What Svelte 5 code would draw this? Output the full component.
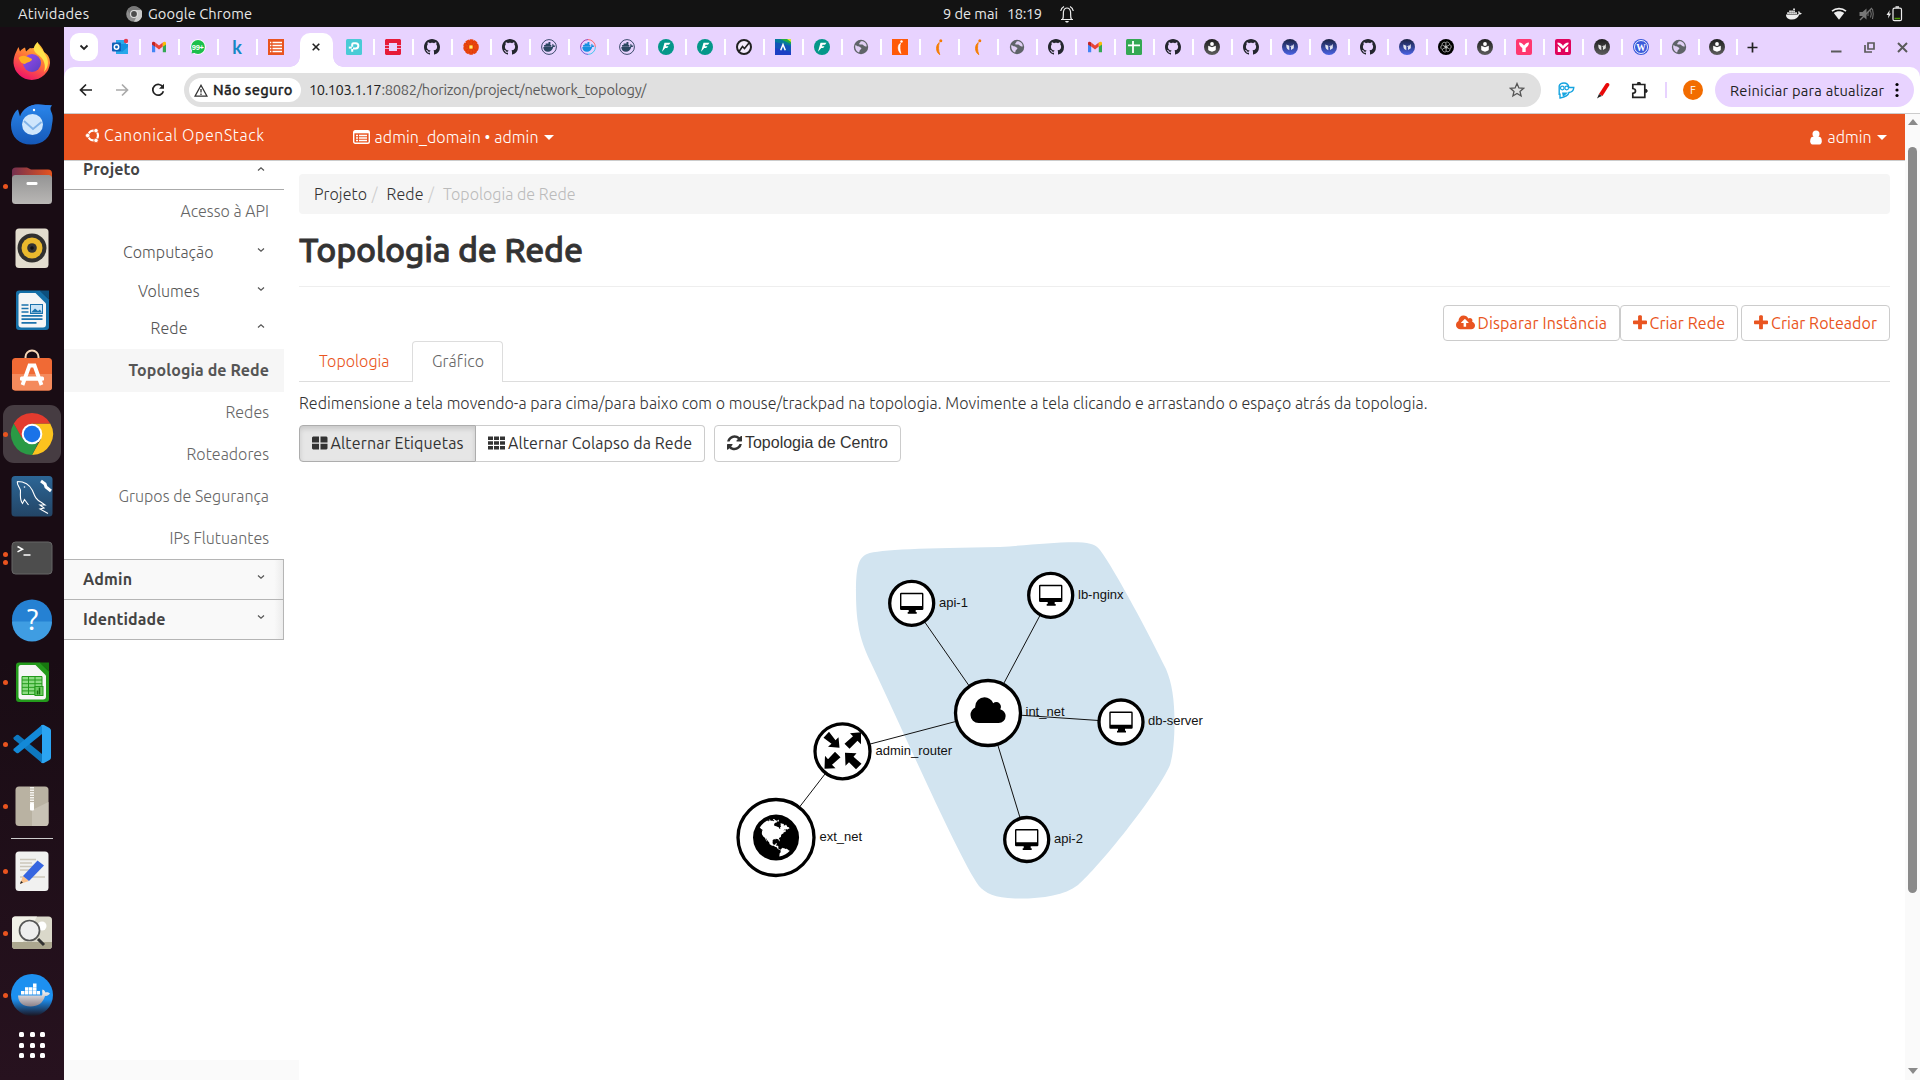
<script>
  // Spreads a label's letters so that it takes the given width in pixels.
  function fit(node, width) {
    const natural = node.getBoundingClientRect().width;
    const gap = (width - natural) / Math.max(1, node.textContent.length - 1);
    node.style.letterSpacing = gap + 'px';
    node.style.marginRight = -gap + 'px';
  }

  const tabsLeft = ['outlook', 'gmail', 'whats', 'k', 'list'];
  const tabsRight = [
    'tp', 'openstack', 'github', 'flower', 'github', 'docker', 'dockerc', 'docker', 'fi', 'fi', 'chart', 'caret',
    'fi', 'globe', 'orange', 'curl', 'curl', 'globe', 'github', 'gmail', 'sheets', 'github', 'reader', 'github',
    'blue', 'blue', 'github', 'blue', 'openai', 'reader', 'ypink', 'mpink', 'gray', 'wp', 'globe', 'reader'
  ];

  const dock = [
    { k: 'firefox', d: 0 }, { k: 'thunderbird', d: 0 }, { k: 'files', d: 1 }, { k: 'music', d: 0 },
    { k: 'writer', d: 0 }, { k: 'software', d: 0 }, { k: 'chrome', d: 1, active: true }, { k: 'mysql', d: 0 },
    { k: 'terminal', d: 2 }, { k: 'help', d: 0 }, { k: 'calc', d: 1 }, { k: 'code', d: 1 }, { k: 'archive', d: 1 },
    { k: 'sep' }, { k: 'editor', d: 1 }, { k: 'viewer', d: 1 }, { k: 'dockerapp', d: 1 }
  ];

  const subItems = [
    { s: 'Redes', w: 43.5 }, { s: 'Roteadores', w: 82.5 }, { s: 'Grupos de Segurança', w: 150.5 }, { s: 'IPs Flutuantes', w: 99.5 }
  ];

  const hub = { x: 988, y: 713 };
  const nodes = [
    { s: 'api-1', x: 911.7, y: 603.3, r: 22, lx: 939, ly: 607, k: 'pc' },
    { s: 'lb-nginx', x: 1050.7, y: 595.3, r: 22, lx: 1078, ly: 599, k: 'pc' },
    { s: 'db-server', x: 1121, y: 722, r: 22, lx: 1148, ly: 725, k: 'pc' },
    { s: 'api-2', x: 1026.7, y: 839.5, r: 22, lx: 1054, ly: 843, k: 'pc' },
    { s: 'int_net', x: 988, y: 713, r: 32.5, lx: 1025.5, ly: 716, k: 'cloud' },
    { s: 'admin_router', x: 842.5, y: 751.3, r: 27.5, lx: 875.5, ly: 755, k: 'router' },
    { s: 'ext_net', x: 776, y: 837.5, r: 38, lx: 819.5, ly: 841, k: 'world' }
  ];

  const CLOUD = 'M1920 1152q0 159-112.5 271.5t-271.5 112.5h-1088q-185 0-316.5-131.5t-131.5-316.5q0-132 71-241.5t187-163.5q-2-28-2-43 0-212 150-362t362-150q158 0 286.5 88t187.5 230q70-62 166-62 106 0 181 75t75 181q0 75-41 138 129 30 213 134.5t84 239.5z';
  const UPLOAD = 'M1280 864q0-14-9-23l-352-352q-9-9-23-9t-23 9l-351 351q-10 12-10 24 0 14 9 23t23 9h224v352q0 13 9.5 22.5t22.5 9.5h192q13 0 22.5-9.5t9.5-22.5v-352h224q13 0 22.5-9.5t9.5-22.5zm640 288q0 159-112.5 271.5t-271.5 112.5h-1088q-185 0-316.5-131.5t-131.5-316.5q0-130 70-240t188-165q-2-30-2-43 0-212 150-362t362-150q156 0 285.5 87t188.5 231q71-62 166-62 106 0 181 75t75 181q0 76-41 138 130 31 213.5 135.5t83.5 238.5z';
  const PLUS = 'M1408 736v192q0 40-28 68t-68 28h-416v416q0 40-28 68t-68 28h-192q-40 0-68-28t-28-68v-416h-416q-40 0-68-28t-28-68v-192q0-40 28-68t68-28h416v-416q0-40 28-68t68-28h192q40 0 68 28t28 68v416h416q40 0 68 28t28 68z';
  const REFRESH = 'M1511 1056q0 5-1 7-64 268-268 434.5t-478 166.5q-146 0-282.5-55t-243.5-157l-129 129q-19 19-45 19t-45-19-19-45v-448q0-26 19-45t45-19h448q26 0 45 19t19 45-19 45l-137 137q71 66 161 102t187 36q134 0 250-65t186-179q11-17 53-117 8-23 30-23h192q13 0 22.5 9.5t9.5 22.5zm25-800v448q0 26-19 45t-45 19h-448q-26 0-45-19t-19-45 19-45l138-138q-148-137-349-137-134 0-250 65t-186 179q-11 17-53 117-8 23-30 23h-199q-13 0-22.5-9.5t-9.5-22.5v-7q65-268 270-434.5t480-166.5q146 0 284 55.5t245 156.5l130-129q19-19 45-19t45 19 19 45z';
  const GLOBE = 'M768 128q209 0 385.5 103t279.5 279.5 103 385.5-103 385.5-279.5 279.5-385.5 103-385.5-103-279.5-279.5-103-385.5 103-385.5 279.5-279.5 385.5-103zm274 521q-2 1-9.5 9.5t-13.5 9.5q2 0 4.5-5t5-11 3.5-7q6-7 22-15 14-6 52-12 34-8 51 11-2-2 9.5-13t14.5-12q3-2 15-4.5t15-7.5l2-22q-12 1-17.5-7t-6.5-21q0 2-6 8 0-7-4.5-8t-11.5 1-9 1q-10-3-15-7.5t-8-16.5-4-15q-2-5-9.5-11t-9.5-10q-1-2-2.5-5.5t-3-6.5-4-5.5-5.5-2.5-7 5-7.5 10-4.5 5q-3-2-6-1.5t-4.5 1-4.5 3-5 3.5q-3 2-8.5 3t-8.5 2q15-5-1-11-10-4-16-3 9-4 7.5-12t-8.5-14h5q-1-4-8.5-8.5t-17.5-8.5-13-6q-8-5-34-9.5t-33-.5q-5 6-4.5 10.5t4 14 3.5 12.5q1 6-5.5 13t-6.5 12q0 7 14 15.5t10 21.5q-3 8-16 16t-16 12q-5 8-1.5 18.5t10.5 16.5q2 2 1.5 4t-3.5 4.5-5.5 4-6.5 3.5l-3 2q-11 5-20.5-6t-13.5-26q-7-25-16-30-23-8-29 1-5-13-41-26-25-9-58-4 6-1 0-15-7-15-19-12 3-6 4-17.5t1-13.5q3-13 12-23 1-1 7-8.5t9.5-13.5.5-6q35 4 50-11 5-5 11.5-17t10.5-17q9-6 14-5.5t14.5 5.5 14.5 5q14 1 15.5-11t-7.5-20q12 1 3-17-4-7-8-9-12-4-27 5-8 4 2 8-1-1-9.5 10.5t-16.5 17.5-16-5q-1-1-5.5-13.5t-9.5-13.5q-8 0-16 15 3-8-11-15t-24-8q19-12-8-27-7-4-20.5-5t-19.5 4q-5 7-5.5 11.5t5 8 10.5 5.5 11.5 4 8.5 3q14 10 8 14-2 1-8.5 3.5t-11.5 4.5-6 4q-3 4 0 14t-2 14q-5-5-9-17.5t-7-16.5q7 9-25 6l-10-1q-4 0-16 2t-20.5 1-13.5-8q-4-8 0-20 1-4 4-2-4-3-11-9.5t-10-8.5q-46 15-94 41 6 1 12-1 5-2 13-6.5t10-5.5q34-14 42-7l5-5q14 16 20 25-7-4-30-1-20 6-22 12 7 12 5 18-4-3-11.5-10t-14.5-11-15-5q-16 0-22 1-146 80-235 222 7 7 12 8 4 1 5 9t2.5 11 11.5-3q9 8 3 19 1-1 44 27 19 17 21 21 3 11-10 18-1-2-9-9t-9-4q-3 5 .5 18.5t10.5 12.5q-7 0-9.5 16t-2.5 35.5-1 23.5l2 1q-3 12 5.5 34.5t21.5 19.5q-13 3 20 43 6 8 8 9 3 2 12 7.5t15 10 10 10.5q4 5 10 22.5t14 23.5q-2 6 9.5 20t10.5 23q-1 0-2.5 1t-2.5 1q3 7 15.5 14t15.5 13q1 3 2 10t3 11 8 2q2-20-24-62-15-25-17-29-3-5-5.5-15.5t-4.5-14.5q2 0 6 1.5t8.5 3.5 7.5 4 2 3q-3 7 2 17.5t12 18.5 17 19 12 13q6 6 14 19.5t0 13.5q9 0 20 10.5t17 19.5q5 8 8 26t5 24q2 7 8.5 13.5t12.5 9.5l16 8 13 7q5 2 18.5 10.5t21.5 11.5q10 4 16 4t14.5-2.5 13.5-3.5q15-2 29 15t21 21q36 19 55 11-2 1 .5 7.5t8 15.5 9 14.5 5.5 8.5q5 6 18 15t18 15q6-4 7-9-3 8 7 20t18 10q14-3 14-32-31 15-49-18 0-1-2.5-5.5t-4-8.5-2.5-8.5 0-7.5 5-3q9 0 10-3.5t-2-12.5-4-13q-1-8-11-20t-12-15q-5 9-16 8t-16-9q0 1-1.5 5.5t-1.5 6.5q-13 0-15-1 1-3 2.5-17.5t3.5-22.5q1-4 5.5-12t7.5-14.5 4-12.5-4.5-9.5-17.5-2.5q-19 1-26 20-1 3-3 10.5t-5 11.5-9 7q-7 3-24 2t-24-5q-13-8-22.5-29t-9.5-37q0-10 2.5-26.5t3-25-5.5-24.5q3-2 9-9.5t10-10.5q2-1 4.5-1.5t4.5 0 4-1.5 3-6q-1-1-4-3-3-3-4-3 7 3 28.5-1.5t27.5 1.5q15 11 22-2 0-1-2.5-9.5t-.5-13.5q5 27 29 9 3 3 15.5 5t17.5 5q3 2 7 5.5t5.5 4.5 5-.5 8.5-6.5q10 14 12 24 11 40 19 44 7 3 11 2t4.5-9.5 0-14-1.5-12.5l-1-8v-18l-1-8q-15-3-18.5-12t1.5-18.5 15-18.5q1-1 8-3.5t15.5-6.5 12.5-8q21-19 15-35 7 0 11-9-1 0-5-3t-7.5-5-4.5-2q9-5 2-16 5-3 7.5-11t7.5-10q9 12 21 2 7-8 1-16 5-7 20.5-10.5t18.5-9.5q7 2 8-2t1-12 3-12q4-5 15-9t13-5l17-11q3-4 0-4 18 2 31-11 10-11-6-20 3-6-3-9.5t-15-5.5q3-1 11.5-.5t10.5-1.5q15-10-7-16-17-5-43 12zm-163 877q206-36 351-189-3-3-12.5-4.5t-12.5-3.5q-18-7-24-8 1-7-2.5-13t-8-9-12.5-8-11-7q-2-2-7-6t-7-5.5-7.5-4.5-8.5-2-10 1l-3 1q-3 1-5.5 2.5t-5.5 3-4 3 0 2.5q-21-17-36-22-5-1-11-5.5t-10.5-7-10-1.5-11.5 7q-5 5-6 15t-2 13q-7-5 0-17.5t2-18.5q-3-6-10.5-4.5t-12 4.5-11.5 8.5-9 6.5-8.5 5.5-8.5 7.5q-3 4-6 12t-5 11q-2-4-11.5-6.5t-9.5-5.5q2 10 4 35t5 38q7 31-12 48-27 25-29 40-4 22 12 26 0 7-8 20.5t-7 21.5q0 6 2 16z';
  const OCTOCAT = 'M8 0C3.58 0 0 3.58 0 8c0 3.54 2.29 6.53 5.47 7.59.4.07.55-.17.55-.38 0-.19-.01-.82-.01-1.49-2.01.37-2.53-.49-2.69-.94-.09-.23-.48-.94-.82-1.13-.28-.15-.68-.52-.01-.53.63-.01 1.08.58 1.23.82.72 1.21 1.87.87 2.33.66.07-.52.28-.87.51-1.07-1.78-.2-3.64-.89-3.64-3.95 0-.87.31-1.59.82-2.15-.08-.2-.36-1.02.08-2.12 0 0 .67-.21 2.2.82.64-.18 1.32-.27 2-.27.68 0 1.36.09 2 .27 1.53-1.04 2.2-.82 2.2-.82.44 1.1.16 1.92.08 2.12.51.56.82 1.27.82 2.15 0 3.07-1.87 3.75-3.65 3.95.29.25.54.73.54 1.48 0 1.07-.01 1.93-.01 2.2 0 .21.15.46.55.38A8.012 8.012 0 0 0 16 8c0-4.42-3.58-8-8-8z';
  const WHALE = 'M1 8.5h11.2c.8 0 1.300-.4 1.400-1.200-.5-.7-.4-1.700.2-2.300.8.500 1 1.100 1 1.800.8-.1 1.500.1 2 .5-.5 1-1.400 1.300-2.500 1.200-1.300 3.300-3.800 5-7.300 5-4 0-6-1.600-6-5zM2.200 6.300h1.700v1.600h-1.700zM4.200 6.300h1.700v1.600h-1.700zM6.200 6.300h1.700v1.600h-1.700zM8.200 6.300h1.700v1.600h-1.700zM10.200 6.300h1.700v1.600h-1.700zM4.200 4.400h1.700v1.600h-1.700zM6.200 4.400h1.700v1.600h-1.700zM8.200 4.400h1.700v1.600h-1.700zM8.200 2.500h1.700v1.600h-1.700z';
  const MINIWHALE = 'M2.300 8h8.200c.7 0 1-.5.8-1.200-.2-.9 0-1.600.5-2 .6.500.9 1.100.9 1.700.7-.1 1.100 0 1.600.4-.4.800-1.100 1.200-2 1.200C11.500 11.300 9.500 12.800 7 12.800c-3 0-4.700-1.700-4.700-4.800zM3.100 6h7.200v1.700H3.100zM4.600 4.400h4.800v1.500H4.600zM7.500 2.900h1.900v1.500H7.500z';
</script>

{#snippet label(s, w)}<span class="fit" use:fit={w}>{s}</span>{/snippet}

{#snippet favicon(k)}
  <svg class="fav" viewBox="0 0 16 16">
    {#if k === 'outlook'}
      <rect x="4" y="1" width="10" height="8" fill="#28a8ea" /><path d="M9 5h7v10H4V9z" fill="#1490df" /><path d="M4 9l6 4 6-5v7H4z" fill="#28a8ea" />
      <rect y="3.500" width="9" height="9" rx="1" fill="#0f62b8" /><circle cx="4.500" cy="8" r="2.200" fill="none" stroke="#fff" stroke-width="1.500" />
      <circle cx="14" cy="2" r="2.200" fill="#e23b4b" />
    {:else if k === 'gmail'}
      <path d="M1 4v9.300h3.200V7z" fill="#4285f4" /><path d="M11.800 7v6.300H15V4z" fill="#34a853" />
      <path d="M4.200 3.400L8 6.400l3.800-3v4.200L8 10.500 4.200 7.600z" fill="#ea4335" /><path d="M1 4.200v1.300L4.200 7.800V3.400C3 2.400 1 2.700 1 4.200z" fill="#c5221f" /><path d="M15 4.200v1.300l-3.200 2.300V3.400C13 2.400 15 2.700 15 4.200z" fill="#fbbc04" />
    {:else if k === 'whats'}
      <circle cx="8" cy="8" r="7.800" fill="#fff" /><circle cx="8" cy="8" r="6.900" fill="#1bbf4b" /><path d="M1.500 14.500l1-4 3 3z" fill="#1bbf4b" />
      <text x="7.700" y="10.800" class="badge">99+</text>
    {:else if k === 'k'}
      <text x="8" y="15" class="kmark">k</text>
    {:else if k === 'list'}
      <rect width="16" height="16" fill="#e9541f" /><path d="M4.500 3.500H14M4.500 6.500H14M4.500 9.500H14M4.500 12.500H14M2 3.500h1.300M2 6.500h1.300M2 9.500h1.300M2 12.500h1.300" stroke="#fff" stroke-width="1.300" />
    {:else if k === 'tp'}
      <rect width="16" height="16" rx="1.500" fill="#4acbd6" /><path d="M6.200 12.800V10M6.200 7.800V5.500q0-1.300 1.300-1.300h2.200a2.600 2.600 0 0 1 0 5.300H7" fill="none" stroke="#fff" stroke-width="2" /><path d="M2.800 8.600h3" stroke="#fff" stroke-width="2" />
    {:else if k === 'openstack'}
      <path d="M1 0h14l1 1v5h-4V4H4v2H0V1zM0 10h4v2h8v-2h4v5l-1 1H1l-1-1z" fill="#e61b38" /><path d="M0 6.800h4v2.400H0zM12 6.800h4v2.400h-4z" fill="#e61b38" />
    {:else if k === 'github'}
      <path d={OCTOCAT} fill="#24262e" />
    {:else if k === 'flower'}
      <circle cx="8" cy="8" r="7" fill="#d93608" /><circle cx="8" cy="8" r="6.300" fill="none" stroke="#e8430c" stroke-width="3" stroke-dasharray="3.300 .66" /><circle cx="8" cy="8" r="4" fill="none" stroke="#e8480f" stroke-width="2.500" stroke-dasharray="2 .5" /><circle cx="8" cy="8" r="2.200" fill="#ffb52a" /><circle cx="8" cy="8" r="1.100" fill="#fff0a0" />
    {:else if k === 'docker'}
      <circle cx="8" cy="8" r="7.400" fill="none" stroke="#3b4b6b" stroke-width="1" /><path d={MINIWHALE} fill="#2b4760" />
    {:else if k === 'dockerc'}
      <path d="M8 .6A7.400 7.400 0 0 0 .6 8" class="ring" stroke="#a33ea5" /><path d="M8 .6A7.400 7.400 0 0 1 15.400 8" class="ring" stroke="#ff6b6b" /><path d="M15.400 8A7.400 7.400 0 0 1 8 15.400" class="ring" stroke="#45c8f0" /><path d="M8 15.400A7.400 7.400 0 0 1 .6 8" class="ring" stroke="#6a62d8" />
      <path d={MINIWHALE} fill="#1690e0" />
    {:else if k === 'fi'}
      <circle cx="8" cy="8" r="8" fill="#049789" /><path d="M6.500 3.800h6L11 5.800H8.500L8 7.200h2.500L9.200 9H7.300L4 12.800z" fill="#fff" />
    {:else if k === 'chart'}
      <circle cx="8" cy="8" r="7" fill="#f4ecfc" stroke="#202020" stroke-width="2" /><path d="M3 12.500L6.500 7.500 8.500 9.500 13 4" fill="none" stroke="#202020" stroke-width="1.600" />
    {:else if k === 'caret'}
      <rect width="16" height="16" fill="#1254b8" /><path d="M0 0h16v7L0 3z" fill="#057a9c" /><path d="M5 0h11v5z" fill="#22ad43" /><path d="M12 0h4v3z" fill="#d6e835" /><path d="M0 9l16 4v3H0z" fill="#1c3fc4" /><path d="M5.700 11.200L8 5.500l2.300 5.700" fill="none" stroke="#fff" stroke-width="1.500" />
    {:else if k === 'globe'}
      <circle cx="8" cy="8" r="7.200" fill="#5f6368" /><path d="M2.300 6.200c1.300-.4 1.500 1 2.900 1s1.400 1 2.500 1.300c1.300.3.400 2-.4 2.200-1 .2-.5 2-1.300 2.800C3.500 12.600 1.700 9.500 2.300 6.200zM7.500 2.500c.3 1.300-1.700 1.300-1.200 2.700.4 1 2.600-.2 3.500.6.900.8 2 2.200 3.900 1.600.2-3-3-6-6.200-4.900z" fill="#e0cff4" />
    {:else if k === 'orange'}
      <rect width="16" height="16" fill="#ff5a08" /><circle cx="9.500" cy="2.500" r="1.200" fill="#fff" /><path d="M8.500 4.200C5.500 6 5.500 11.500 8.800 14.500 7.800 11 7.500 7 8.500 4.200z" fill="#fff" stroke="#fff" stroke-width=".8" />
    {:else if k === 'curl'}
      <circle cx="9.800" cy="1.800" r="1.500" fill="#f57c00" /><path d="M8.300 3.500C4.500 6 4.500 13 8.800 15.700 7.200 11.500 7.200 7 8.300 3.500z" fill="#f57c00" stroke="#f57c00" stroke-width=".8" />
    {:else if k === 'sheets'}
      <rect width="16" height="16" rx="1.500" fill="#34a853" /><path d="M7 2v12M2 6.300h12" stroke="#fff" stroke-width="1.800" />
    {:else if k === 'reader' || k === 'blue' || k === 'gray'}
      <circle cx="8" cy="8" r="8" class={'disc-' + k} />
      {#if k === 'reader'}
        <circle cx="8" cy="5" r="1.900" fill="#fff" /><path d="M4.200 6.800L8 8.300l3.800-1.500v3.700c0 .8-1 1.300-1.800 1.600L8 12.700l-2-.6c-.8-.3-1.800-.8-1.800-1.600z" fill="#fff" />
      {:else}
        <path d="M4.300 5.500l3 1.300v4.400L5.300 10C4.300 9 4.300 7 4.300 5.500zM11.800 5v4.300L9 11V8z" fill="#fff" opacity=".85" /><path d="M8.200 8l1.300-2v2z" fill="#fff" />
      {/if}
    {:else if k === 'openai'}
      <circle cx="8" cy="8" r="8" fill="#000" />
      {#each [0, 60, 120, 180, 240, 300] as a}<path d="M8 3.200c2-.8 3.800.8 3.600 2.600L8.200 7.800v2" fill="none" stroke="#ccc" stroke-width=".7" transform={`rotate(${a} 8 8)`} />{/each}
    {:else if k === 'ypink'}
      <rect width="16" height="16" rx="2" fill="#ff3870" /><path d="M3 3.500c2.500 0 4 1.500 5 3 1-1.500 2.500-3 5-3 0 2.500-1.500 4.500-3.300 5.500v4H6.300V9C4.500 8 3 6 3 3.500z" fill="#fff" />
    {:else if k === 'mpink'}
      <rect width="16" height="16" rx="2" fill="#e0045c" /><path d="M2.500 3.500c2.500 0 4.500 1.500 5.500 3.500 1-2 3-3.500 5.500-3.500V5L9.800 8.500 8 10 6.200 8.500 2.500 5zM2.800 7l3 3v3h-3zM13.200 7l-3 3v3h3z" fill="#fff" />
    {:else if k === 'wp'}
      <circle cx="8" cy="8" r="8" fill="#3b5bdb" /><circle cx="8" cy="8" r="6.500" fill="none" stroke="#fff" stroke-width=".9" /><text x="8" y="11.500" class="wmark">W</text>
    {/if}
  </svg>
{/snippet}

{#snippet app(k)}
  <svg class="app" viewBox="0 0 48 48">
    {#if k === 'firefox'}
      <path d="M22 10c5 1 8-2 7-6 3 3 6 6 7 10 5 3 6 7 6 11a18.300 18.300 0 0 1-36.500 0C5.500 18 8 14 10.500 9l1.500 4.500c1-2 3-3 5-4l1 4z" fill="url(#ff)" />
      <path d="M29.500 4c-4 4-5.500 8-.5 12 8 5 9 12 7 18 5-5 5-12 1.500-17-2-5-7-8-8-13z" fill="#ffe14a" /><circle cx="24" cy="25" r="9" fill="url(#fp)" />
      <path d="M10.500 20c4-4 8-2 13.500 1 0 3-5 3-7 5-4 0-5.500-4-6.500-6z" fill="#ffae22" />
    {:else if k === 'thunderbird'}
      <path d="M3 25C3 18 7 11 10 9.500l2 7c2-7 9-12 18-12 5 0 10 1 14 1-2 2-2 4 0 8 1 3 1 6 0 11C43 38 35 44.500 23 44.500S3 37 3 25z" fill="url(#tb)" /><path d="M14 14C17 7 23 4.500 30 4.500c5 0 10 1 14 1-4 2-5 3-8 5.500-8-4-15-2.500-22 3z" fill="#2b7fe8" /><circle cx="24.500" cy="24.500" r="10.500" fill="#cfe6fc" /><path d="M16 21l9 8 8.500-7" fill="none" stroke="#7fb2e8" stroke-width="1.800" /><circle cx="26" cy="10" r="1.200" fill="#fff" />
    {:else if k === 'files'}
      <path d="M4 9q0-3.500 4-3.500h11l4 2h17q4 0 4 4v16H4z" fill="url(#fo)" /><rect x="4" y="13" width="40" height="29" rx="3.500" fill="url(#gr)" /><rect x="18.500" y="20" width="11" height="3" rx="1.300" fill="#fff" />
    {:else if k === 'music'}
      <rect x="7.500" y="4.500" width="33" height="39.500" rx="3.500" fill="#e3ddcf" /><circle cx="24" cy="24" r="14.500" fill="#31302f" /><circle cx="24" cy="24" r="10.500" fill="#eab92d" /><circle cx="24" cy="24" r="4.800" fill="#333" /><circle cx="24" cy="24" r="1.800" fill="#111" />
    {:else if k === 'writer' || k === 'calc'}
      <path d="M11 4.500h21l9 9v27.500q0 3-3 3H11q-3 0-3-3V7.500q0-3 3-3z" fill={k === 'writer' ? '#1670a8' : '#239a1b'} /><path d="M12.500 7h15L38 17.500v21q0 3-3 3H13.500q-3 0-3-3V9.500q0-2.500 2-2.500z" fill="#f6f6f6" /><path d="M31.500 4.500H41v9z" fill={k === 'writer' ? '#0d4f7d' : '#17770f'} />
      {#if k === 'writer'}
        <path d="M13.500 19h7M13.500 22.500h7M13.500 26h7M13.500 29.800h21M13.500 33.200h21M13.500 36.800h15" stroke="#1d73ad" stroke-width="1.700" /><rect x="22.500" y="18.500" width="12" height="9" fill="#cbe4f6" stroke="#1d73ad" /><path d="M23 26.500l4-4 3 2.500 2-1.500 2 3z" fill="#1d73ad" />
      {:else}
        <rect x="14" y="18.500" width="20" height="18" fill="#8cdc82" /><path d="M14 18.500h20v18H14zM14 22h20M14 25.700h20M14 29.300h20M14 32.900h20M20.500 18.500v18M27 18.500v18" fill="none" stroke="#239a1b" stroke-width="1" /><rect x="27" y="28.500" width="8" height="9" fill="#6fcc62" stroke="#239a1b" /><path d="M29.500 36.500v-4M31.500 36.500v-7" stroke="#17770f" stroke-width="1.500" />
      {/if}
    {:else if k === 'software'}
      <path d="M17.500 12V9a6.500 6.500 0 0 1 13 0v3" fill="none" stroke="#f7d7b6" stroke-width="2" /><rect x="4" y="10" width="40" height="32.500" rx="3.500" fill="#f06a35" /><path d="M4 26h40v13q0 3.500-3.500 3.500h-33Q4 42.500 4 39z" fill="#f48a5c" /><path d="M14.500 37L21.500 17.500h5L33.500 37" fill="none" stroke="#fff" stroke-width="3.800" /><rect x="12" y="28.500" width="24" height="4.200" rx="1.500" fill="#fff" />
    {:else if k === 'chrome'}
      <path d="M24 13.500h18.200A21 21 0 0 1 24 45l9-16z" fill="#fcc31e" /><path d="M5.800 13.500L15 29.300 30 33l-6 12A21 21 0 0 1 5.800 13.500z" fill="#2a9a45" /><path d="M5.800 13.500A21 21 0 0 1 42.200 13.500H24L14 28z" fill="#e33b2e" /><circle cx="24" cy="24" r="10.300" fill="#fff" /><circle cx="24" cy="24" r="8.300" fill="#1a73e8" />
    {:else if k === 'mysql'}
      <rect x="3.500" y="4" width="41" height="40.500" rx="3.500" fill="url(#my)" /><path d="M9.500 9.500c7 0 12 3 15 9 2 5 3 9 9 12l3.500 2.500-5 0 4 3-4 1 8 4.500M9.500 9.500c-1 3 2 5 3 9 0 5-1 9 2 13l2-4 4 5.500" fill="none" stroke="#fff" stroke-width="1.100" /><circle cx="16.500" cy="15" r=".8" fill="#fff" /><path d="M33 9l4 3 1 3 5 4" fill="none" stroke="#fff" stroke-width="3" />
    {:else if k === 'terminal'}
      <rect x="4" y="8" width="40" height="32" rx="3.500" fill="#4d4d4d" stroke="#676767" /><path d="M9.500 12.500l5 2.700-5 2.700" fill="none" stroke="#fff" stroke-width="1.500" /><path d="M15.500 21h7" stroke="#fff" stroke-width="1.500" />
    {:else if k === 'help'}
      <circle cx="24" cy="23.500" r="20" fill="#2581d3" /><path d="M4 25.500a20 20 0 0 0 40 0z" fill="#3f9de2" /><text x="24.500" y="34" class="qmark">?</text>
    {:else if k === 'code'}
      <path d="M5.500 17.500l3-2.500q1-.5 2 0L34 34v9L6 19.500q-1-1-.5-2z" fill="#0e78c0" /><path d="M5.500 30.500l3 2.500q1 .5 2 0L34 14V5L6 28.500q-1 1-.5 2z" fill="#1389d8" /><path d="M33 5.500q1.500-1 3-.5l5.500 3q1.500 1 1.500 2.500v27q0 1.500-1.500 2.500L36 43q-1.500.5-3-.5 1 0 1-2v-33q0-1-1-2z" fill="#2ba4f2" />
    {:else if k === 'archive'}
      <rect x="7.500" y="4.500" width="33" height="39.500" rx="3.500" fill="#b9b2a2" /><path d="M24 28l16.500-8v20.500q0 3.500-3.500 3.500H24z" fill="#c8c2b5" /><path d="M24 5v17" stroke="#f4f2ee" stroke-width="4" stroke-dasharray="1.500 1" /><rect x="22" y="21" width="4" height="7.500" rx="1" fill="#fff" />
    {:else if k === 'editor'}
      <rect x="7.500" y="4.500" width="33" height="39.500" rx="3.500" fill="#f1f1f0" /><path d="M12 12.500h16M12 16h12M12 19.500h14M12 23h11M12 30h25" stroke="#cbc6b9" stroke-width="1.500" /><path d="M12 37l3-8 6 5z" fill="#fac08a" /><path d="M15 29l14.500-15.500 6.500 5L21 34z" fill="#3665e0" /><path d="M12 37l1-3 2 1.500z" fill="#222" />
    {:else if k === 'viewer'}
      <rect x="4" y="7.500" width="40" height="32.500" rx="3.500" fill="#dad8ca" /><path d="M7 7.500h22L15 33H4V11q0-3.500 3-3.500z" fill="#f1f0e7" /><path d="M4 33h40v3.500q0 3.500-3.500 3.500h-33Q4 40 4 36.500z" fill="#aca78f" /><circle cx="34" cy="17" r="4.500" fill="#fff" /><circle cx="21.500" cy="21.500" r="10" fill="#eee" stroke="#555" stroke-width="1.700" /><path d="M30 30l6 6" stroke="#333" stroke-width="3" />
    {:else if k === 'dockerapp'}
      <circle cx="24" cy="24" r="21" fill="url(#dk)" /><path d="M10 24.500h24c1-2-.5-4 .5-6 2 .5 2.500 2 3 3 2-.5 3 0 4.500 1-1.500 2-3 2.500-5 2.500-2 7-7 10.500-14.500 10.500S10.500 32 10 24.500z" fill="url(#wh)" /><path d="M13 20h3.500v3.500H13zM17 20h3.500v3.500H17zM21 20h3.500v3.500H21zM25 20h3.500v3.500H25zM29 20h3v3.500H29zM17 16.200h3.500v3.500H17zM21 16.200h3.500v3.500H21zM25 16.200h3.500v3.500H25zM25 12.500h3.500V16H25z" fill="#fff" />
    {/if}
  </svg>
{/snippet}

{#snippet chev(up)}
  <svg class="chev" viewBox="0 0 8 6"><path d={up ? 'M1 4.500L4 1.700l3 2.800' : 'M1 1.500l3 2.800 3-2.800'} fill="none" stroke="#555" stroke-width="1.200" /></svg>
{/snippet}

<svg class="defs" width="0" height="0">
  <defs>
    <linearGradient id="ff" x1=".8" y1="0" x2=".3" y2="1"><stop offset="0" stop-color="#ffcf33" /><stop offset=".5" stop-color="#ff7139" /><stop offset="1" stop-color="#ef0f6b" /></linearGradient>
    <linearGradient id="fp" x1="0" y1="0" x2="1" y2="1"><stop offset="0" stop-color="#9a4bf0" /><stop offset="1" stop-color="#5b3fc0" /></linearGradient>
    <linearGradient id="tb" x1="0" y1="0" x2="0" y2="1"><stop offset="0" stop-color="#2a86ea" /><stop offset="1" stop-color="#1558b8" /></linearGradient>
    <linearGradient id="fo"><stop offset="0" stop-color="#74304f" /><stop offset="1" stop-color="#e6541e" /></linearGradient>
    <linearGradient id="gr" x1="0" y1="0" x2="0" y2="1"><stop offset="0" stop-color="#949494" /><stop offset="1" stop-color="#b9b7b5" /></linearGradient>
    <linearGradient id="my" x1="0" y1="0" x2="0" y2="1"><stop offset="0" stop-color="#2c6696" /><stop offset="1" stop-color="#234566" /></linearGradient>
    <linearGradient id="dk" x1="0" y1="0" x2="0" y2="1"><stop offset=".6" stop-color="#1d90f0" /><stop offset="1" stop-color="#1b1420" /></linearGradient>
    <linearGradient id="wh" x1="0" y1="0" x2="0" y2="1"><stop offset=".2" stop-color="#e8e8ea" /><stop offset="1" stop-color="#8b8088" /></linearGradient>
    <linearGradient id="darkdisc" x1="0" y1="0" x2="0" y2="1"><stop offset="0" stop-color="#1e1e1e" /><stop offset="1" stop-color="#5e5e5e" /></linearGradient>
    <linearGradient id="bluedisc" x1="0" y1="0" x2="0" y2="1"><stop offset="0" stop-color="#1c2340" /><stop offset="1" stop-color="#4a63e6" /></linearGradient>
  </defs>
</svg>

<div class="screen">
  <header class="panel">
    <div class="act">{@render label('Atividades', 71)}</div>
    <svg class="gc" viewBox="0 0 16 16"><circle cx="8" cy="8" r="7.800" fill="#8d8d8d" /><path d="M8 3.500h7A7.800 7.800 0 0 1 8 15.800l3-6z" fill="#c9c9c9" /><path d="M1.200 4.500A7.800 7.800 0 0 1 14.700 4H8L5 9z" fill="#787878" /><circle cx="8" cy="8" r="4" fill="#dedede" /><circle cx="8" cy="8" r="2.900" fill="#4c4c4c" /></svg>
    {@render label('Google Chrome', 104)}
    <div class="clock">{@render label('9 de mai', 55)}{@render label('18:19', 35)}
      <svg width="16" height="18" viewBox="0 0 16 18"><path d="M2 14.500h12M3.500 14.500C5 12 4 9 4.500 6.500 5 4 6.500 3 8 3s3 1 3.500 3.500c.5 2.500-.5 5.500 1 8M5 1.500C3 2.500 2 4 1.700 6M11 1.500c2 1 3 2.500 3.300 4.500" fill="none" stroke="#eee" stroke-width="1.200" /><path d="M6 16h4l-1 1.500H7z" fill="#eee" /></svg>
    </div>
    <div class="status">
      <svg width="17" height="16" viewBox="0 0 17 16"><path d={WHALE} fill="#eee" /></svg>
      <svg class="wifi" width="16" height="14" viewBox="0 0 16 14"><path d="M1 4.200C5 .8 11 .8 15 4.200" fill="none" stroke="#eee" stroke-width="1.600" /><path d="M2.800 6c3-2.300 7.400-2.300 10.400 0L8 12.800z" fill="#eee" /></svg>
      <svg class="mute" width="15" height="14" viewBox="0 0 15 14"><path d="M.5 5h3l4-3.500v11L3.500 9h-3z" fill="#777" /><path d="M9 5v4M11.500 3.500q1.500 3.500 0 7M13.500 2q1.500 5 0 10" stroke="#777" fill="none" /><path d="M1 13L13 1" stroke="#777" stroke-width="1.500" /></svg>
      <svg width="17" height="16" viewBox="0 0 17 16"><path d="M3.800 4L.5 9h2L2 12.500 5 7.500H3.200z" fill="#eee" /><rect x="7" y="2.200" width="8.500" height="12.500" rx="1.500" fill="none" stroke="#eee" stroke-width="1.200" /><path d="M9.500 1h3.500" stroke="#eee" stroke-width="1.500" /><path d="M8.500 12.500H14" stroke="#4e9a06" stroke-width="1.500" /></svg>
    </div>
  </header>

  <div class="desk">
    <nav class="dock">
      {#each dock as a}
        {#if a.k === 'sep'}
          <div class="dsep"></div>
        {:else}
          <div class="slot">
            <div class="dots">{#each Array(a.d) as _}<i></i>{/each}</div>
            <div class="tile" class:on={a.active}>{@render app(a.k)}</div>
          </div>
        {/if}
      {/each}
      <div class="grid9">{#each Array(9) as _}<i></i>{/each}</div>
    </nav>

    <div class="browser">
      <div class="tabstrip">
        <div class="search"><svg width="10" height="7" viewBox="0 0 10 7"><path d="M1.500 1.500L5 5l3.500-3.500" fill="none" stroke="#222" stroke-width="1.800" /></svg></div>
        {#each tabsLeft as t, i}<div class="tab" class:nosep={i === 4}>{@render favicon(t)}</div>{/each}
        <div class="tab current"><svg width="8" height="8" viewBox="0 0 8 8"><path d="M.7.7l6.600 6.600M7.300.7L.7 7.300" stroke="#222" stroke-width="1.600" /></svg></div>
        {#each tabsRight as t, i}<div class="tab" class:tight={i > 33}>{@render favicon(t)}</div>{/each}
        <svg class="plus" width="11" height="11" viewBox="0 0 11 11"><path d="M5.500.5v10M.5 5.500h10" stroke="#222" stroke-width="1.700" /></svg>
        <div class="winbtns">
          <svg width="11" height="11" viewBox="0 0 11 11"><path d="M0 9.500h10.500" stroke="#5a5a5a" stroke-width="2" /></svg>
          <svg width="11" height="11" viewBox="0 0 11 11"><path d="M4 1h6v6H4zM1 3v7h7" fill="none" stroke="#5a5a5a" stroke-width="1.700" /></svg>
          <svg width="11" height="11" viewBox="0 0 11 11"><path d="M1 1l9 9M10 1l-9 9" stroke="#5a5a5a" stroke-width="2" /></svg>
        </div>
      </div>

      <div class="toolbar">
        <svg class="nav" viewBox="0 0 14 14"><path d="M13 7H2M7 1.500L1.500 7 7 12.500" fill="none" stroke="#222" stroke-width="1.700" /></svg>
        <svg class="nav" viewBox="0 0 14 14"><path d="M1 7h11M7 1.500L12.500 7 7 12.500" fill="none" stroke="#aaa" stroke-width="1.700" /></svg>
        <svg class="nav" viewBox="0 0 14 14"><path d="M12 4.300A5.400 5.400 0 1 0 12.400 8.300" fill="none" stroke="#222" stroke-width="1.700" /><path d="M13 .8v5H8z" fill="#222" /></svg>
        <div class="address">
          <div class="chip">
            <svg width="14" height="13" viewBox="0 0 14 13"><path d="M7 1.300L13 12.200H1z" fill="none" stroke="#333" stroke-width="1.300" /><path d="M7 5v3.500M7 9.600v1.400" stroke="#333" stroke-width="1.300" /></svg>
            {@render label('Não seguro', 79.5)}
          </div>
          <div class="url"><b>{@render label('10.103.1.17', 72.5)}</b>{@render label(':8082/horizon/project/network_topology/', 265)}</div>
          <svg class="star" width="16" height="16" viewBox="0 0 16 16"><path d="M8 1.500l1.900 4.400 4.700.4-3.600 3.100 1.100 4.600L8 11.500 3.900 14 5 9.400 1.400 6.300l4.700-.4z" fill="none" stroke="#555" stroke-width="1.300" /></svg>
        </div>
        <svg class="ext bird" viewBox="0 0 17 17"><path d="M1.200 13V4Q2 1 6 1t5 4.500h4.800Q15.500 10 11 10.500 10 14.500 2 16V11.500" fill="none" stroke="#16a4e0" stroke-width="1.400" /><circle cx="4.300" cy="6" r="1.800" fill="none" stroke="#16a4e0" stroke-width="1.200" /><circle cx="8.700" cy="6" r="1.800" fill="none" stroke="#16a4e0" stroke-width="1.200" /><path d="M4 10.500h6L5 15z" fill="#16a4e0" /></svg>
        <svg class="ext" viewBox="0 0 17 17"><path d="M4 12L10.500 2q1-1.500 2.500-1t1.500 2L7.500 14z" fill="#e80909" /><path d="M4 12l3 2-2.500 1L2 16.500z" fill="#222" /></svg>
        <svg class="ext" viewBox="0 0 17 17"><path d="M1.800 2.500h12v12.800h-12v-4q2.700-.4 2.700-2.400T1.800 6.500z" fill="none" stroke="#222" stroke-width="1.700" /><path d="M6.300 1.700a1.600 1.600 0 0 1 3.200 0zM14.600 7.300a1.600 1.600 0 0 1 0 3.200z" fill="#222" stroke="#222" /></svg>
        <span class="vsep"></span>
        <span class="avatar">F</span>
        <div class="update">{@render label('Reiniciar para atualizar', 154)}<svg width="4" height="16" viewBox="0 0 4 16"><circle cx="2" cy="2.500" r="1.600" /><circle cx="2" cy="8" r="1.600" /><circle cx="2" cy="13.500" r="1.600" /></svg></div>
      </div>

      <div class="viewport">
        <div class="page">
          <div class="topnav">
            <svg class="ubuntu" width="15" height="15" viewBox="0 0 15 15"><circle cx="8.200" cy="7.500" r="4.800" fill="none" stroke="#fff" stroke-width="2.200" /><g fill="#fff" stroke="#e95420" stroke-width=".7"><circle cx="2.600" cy="7.500" r="2.200" /><circle cx="11" cy="2.600" r="2.200" /><circle cx="11" cy="12.400" r="2.200" /></g></svg>
            <div class="brand">{@render label('Canonical OpenStack', 160)}</div>
            <div class="domain">
              <svg width="17" height="14" viewBox="0 0 17 14"><rect x=".7" y=".7" width="15.600" height="12.600" rx="1.500" fill="none" stroke="#fff" stroke-width="1.400" /><path d="M1 1h15v2.300H1z" fill="#fff" /><path d="M3 5.500h2M6 5.500h8M3 8h2M6 8h8M3 10.500h2M6 10.500h8" stroke="#fff" stroke-width="1.300" /></svg>
              {@render label('admin_domain • admin', 164)}<i class="tri"></i>
            </div>
            <div class="user">
              <svg width="12" height="15" viewBox="0 0 12 15"><circle cx="6" cy="4" r="3.500" fill="#fff" /><path d="M3 6.800h6c2 0 2.800 2 2.800 4.500 0 2-.8 3.200-2.300 3.200h-7C1 14.500.2 13.300.2 11.300.2 8.800 1 6.800 3 6.800z" fill="#fff" /></svg>
              {@render label('admin', 44)}<i class="tri"></i>
            </div>
          </div>

          <div class="columns">
            <aside>
              <div class="sec proj"><b>{@render label('Projeto', 57)}</b>{@render chev(true)}</div>
              <div class="leaf api">{@render label('Acesso à API', 88.5)}</div>
              <div class="grp g1">{@render label('Computação', 90.5)}{@render chev(false)}</div>
              <div class="grp g2">{@render label('Volumes', 61.5)}{@render chev(false)}</div>
              <div class="grp g3">{@render label('Rede', 37)}{@render chev(true)}</div>
              <div class="leaf sel">{@render label('Topologia de Rede', 140.5)}</div>
              {#each subItems as it}<div class="leaf sub">{@render label(it.s, it.w)}</div>{/each}
              <div class="sec box"><b>{@render label('Admin', 49)}</b>{@render chev(false)}</div>
              <div class="sec box"><b>{@render label('Identidade', 82.5)}</b>{@render chev(false)}</div>
              <div class="foot"></div>
            </aside>

            <main>
              <div class="crumbs">
                {@render label('Projeto', 53)}<span class="sl">/</span>{@render label('Rede', 37)}<span class="sl">/</span><span class="here">{@render label('Topologia de Rede', 132.5)}</span>
              </div>
              <h1>{@render label('Topologia de Rede', 284)}</h1>
              <div class="actions">
                <button class="b1"><svg width="19" height="18" viewBox="0 0 1920 1792"><path d={UPLOAD} /></svg>{@render label('Disparar Instância', 129.5)}</button>
                <button class="b2"><svg width="14" height="18" viewBox="0 0 1408 1792"><path d={PLUS} /></svg>{@render label('Criar Rede', 75.5)}</button>
                <button class="b3"><svg width="14" height="18" viewBox="0 0 1408 1792"><path d={PLUS} /></svg>{@render label('Criar Roteador', 106)}</button>
              </div>
              <div class="tabs">
                <span class="t1">{@render label('Topologia', 70.5)}</span>
                <span class="t2">{@render label('Gráfico', 51.5)}</span>
              </div>
              <p>{@render label('Redimensione a tela movendo-a para cima/para baixo com o mouse/trackpad na topologia. Movimente a tela clicando e arrastando o espaço atrás da topologia.', 1128.5)}</p>
              <div class="toggles">
                <button class="k1"><svg width="16" height="14" viewBox="0 0 16 14"><path d="M1 .5h6v6H0v-5zM8.500.5h6l1 1v5h-7zM0 7.800h7v5.700H1l-1-1zM8.500 7.800h7v4.700l-1 1h-6z" /></svg>{@render label('Alternar Etiquetas', 133)}</button>
                <button class="k2"><svg width="17" height="14" viewBox="0 0 17 14"><path d="M0 .5h5V4H0zM6 .5h5V4H6zM12 .5h5V4h-5zM0 5.200h5v3.500H0zM6 5.200h5v3.500H6zM12 5.200h5v3.500h-5zM0 10h5v3.500H0zM6 10h5v3.500H6zM12 10h5v3.500h-5z" /></svg>{@render label('Alternar Colapso da Rede', 184)}</button>
                <button class="k3"><svg width="15" height="17.500" viewBox="0 0 1536 1792"><path d={REFRESH} /></svg>{@render label('Topologia de Centro', 143)}</button>
              </div>
              <svg class="graph" viewBox="299 480 1591 600">
                <path class="hull" d="M867 554C880 549 925 548.500 1000 547C1030 545 1055 542 1078 542.300C1092 543 1096 545 1100 550C1115 570 1150 636 1166 669C1172 683 1174.500 700 1174.500 722C1174.500 740 1173 755 1170 765C1157 795 1098 868 1078 885C1064 896 1040 899 1015 898.500C995 898 985 893 979 886C960 860 905 735 871 663C861 642 856 626 856 593C856 568 858 558 867 554Z" />
                {#each nodes.slice(0, 4) as n}<line x1={hub.x} y1={hub.y} x2={n.x} y2={n.y} />{/each}
                <line x1={hub.x} y1={hub.y} x2="842.5" y2="751.3" /><line x1="842.5" y1="751.3" x2="776" y2="837.5" />
                {#each nodes as n}
                  <circle cx={n.x} cy={n.y} r={n.r} />
                  <g transform={`translate(${n.x} ${n.y})`}>
                    {#if n.k === 'pc'}
                      <path fill-rule="evenodd" d="M-10.500-10.500h21a1.200 1.200 0 0 1 1.200 1.200V5.500a1.200 1.200 0 0 1-1.200 1.200H4V8.800H5V10.500H-4V8.800H-3V6.700h-7.500a1.200 1.200 0 0 1-1.200-1.200V-9.300A1.200 1.200 0 0 1-10.500-10.500zM-10.300-9V2.800h20.600V-9z" />
                    {:else if n.k === 'cloud'}
                      <path transform="translate(-17.500 -18) scale(.0183)" d={CLOUD} />
                    {:else if n.k === 'router'}
                      <path d="M-3-3.500l-1-10.500-3 3-6.500-8.500-5.500 6 8 6-3.500 3zM18.500-19l-11 1 3 3-8.500 7.500 5 5 8-8 3.500 3.500zM-18 17.500l11-.5-3.500-3.500 8.500-7.500-5.500-5.500-7 7.500-3-3.500zM2.500 1.500l11.500.5-3 3.500 8 7-5.500 5.500-7-7-3.500 3.500z" />
                    {:else}
                      <path transform="translate(-23 -26.800) scale(.03)" d={GLOBE} />
                    {/if}
                  </g>
                  <text x={n.lx} y={n.ly}>{n.s}</text>
                {/each}
              </svg>
            </main>
          </div>
        </div>
        <div class="scroll">
          <i class="up"></i><div class="thumb"></div><i class="down"></i>
        </div>
      </div>
    </div>
  </div>
</div>

<style>
  :global(body) { margin: 0; overflow: hidden; }
  * { box-sizing: border-box; }
  .defs { position: absolute; }
  .fit { display: inline-block; white-space: nowrap; flex: none; }
  svg { flex: none; display: block; }
  .screen { width: 1920px; height: 1080px; display: flex; flex-direction: column; font-family: Ubuntu, 'Noto Sans', sans-serif; background: #fff; overflow: hidden; }

  .panel { height: 27px; flex: none; background: #131313; color: #e8e8e8; display: flex; align-items: center; font-size: 14.670px; line-height: 26px; }
  .act { margin-left: 18px; width: 108px; }
  .gc { width: 16px; height: 16px; margin-right: 6px; }
  .clock { display: flex; align-items: center; gap: 9px; margin-left: 691px; }
  .clock svg { margin-left: 8px; }
  .status { display: flex; align-items: center; margin-left: auto; padding-right: 17px; }
  .wifi { margin-left: 29px; }
  .mute { margin: 0 12px; }

  .desk { flex: 1; display: flex; min-height: 0; }
  .dock { width: 64px; flex: none; background: linear-gradient(#190c14 60%, #27121f); display: flex; flex-direction: column; align-items: center; padding-top: 4px; }
  .slot { width: 64px; height: 62px; flex: none; display: flex; align-items: center; }
  .dots { width: 3px; flex: none; display: flex; flex-direction: column; gap: 3px; }
  .dots i { width: 5px; height: 5px; border-radius: 50%; background: #e9541f; margin-left: 3px; z-index: 1; }
  .tile { width: 58px; height: 58px; border-radius: 11px; display: flex; align-items: center; justify-content: center; }
  .tile.on { background: #463c42; }
  .app { width: 48px; height: 48px; }
  .dsep { width: 42px; height: 1px; background: #ccc; margin: 1px 0; flex: none; }
  .grid9 { display: grid; grid-template-columns: repeat(3, 5px); gap: 5.500px; margin-top: 6px; }
  .grid9 i { width: 5px; height: 5px; background: #fff; border-radius: 1.500px; }
  .qmark { font: 30px Ubuntu, 'Open Sans', sans-serif; fill: #fff; text-anchor: middle; }

  .browser { flex: 1; min-width: 0; display: flex; flex-direction: column; background: #e8d3ff; }
  .tabstrip { height: 40px; flex: none; display: flex; align-items: center; padding-left: 6px; background: #e8d3ff; }
  .search { width: 28px; height: 28px; border-radius: 9px; background: #fff; display: flex; align-items: center; justify-content: center; margin-right: 2.500px; }
  .tab { width: 39px; height: 40px; flex: none; display: flex; align-items: center; justify-content: center; position: relative; }
  .tab.tight { width: 38px; }
  .tab::after { content: ''; position: absolute; right: -1.500px; top: 12px; width: 2px; height: 16px; background: #fff; }
  .tab.nosep::after { display: none; }
  .fav { width: 16px; height: 16px; overflow: visible; }
  .tab.current { width: 33px; height: 34px; margin: 0 1.500px 0 4px; align-self: flex-end; background: #fff; border-radius: 10px 10px 0 0; padding-bottom: 6px; }
  .tab.current::after, .tab.current::before { content: ''; position: absolute; bottom: 0; top: auto; width: 10px; height: 10px; }
  .tab.current::before { left: -10px; background: radial-gradient(circle at 0 0, #e8d3ff 9.500px, #fff 10px); }
  .tab.current::after { right: -10px; background: radial-gradient(circle at 100% 0, #e8d3ff 9.500px, #fff 10px); }
  .plus { margin-left: 11px; }
  .winbtns { margin-left: auto; display: flex; gap: 22px; padding-right: 12px; }
  .badge { font: bold 7.500px 'Liberation Sans', sans-serif; fill: #fff; text-anchor: middle; letter-spacing: -.3px; }
  .kmark { font: bold 18px Lato, 'Noto Sans', sans-serif; fill: #1488c4; text-anchor: middle; }
  .wmark { font: bold 9.500px 'Liberation Serif', serif; fill: #fff; text-anchor: middle; }
  .ring { fill: none; stroke-width: 1; }
  .disc-reader, .disc-gray { fill: url(#darkdisc); }
  .disc-blue { fill: url(#bluedisc); }

  .toolbar { height: 47px; flex: none; background: #fff; border-radius: 10px 10px 0 0; border-bottom: 1px solid #ccc; display: flex; align-items: center; padding-left: 15px; }
  .nav { width: 14px; height: 14px; margin-right: 22px; }
  .address { width: 1357px; height: 34px; border-radius: 17px; background: #e0e0e0; margin-left: -3px; padding-left: 5px; display: flex; align-items: center; font-size: 14.670px; line-height: 24px; }
  .chip { width: 112px; height: 24px; border-radius: 12px; background: #fff; display: flex; align-items: center; gap: 5px; padding-left: 5px; font-weight: 500; color: #222; -webkit-text-stroke: .3px #222; }
  .url { margin-left: 8px; color: #5c5c5c; }
  .url b { font-weight: 400; color: #222; }
  .star { margin-left: auto; margin-right: 16px; }
  .ext { width: 17px; height: 17px; margin-left: 19px; }
  .bird { margin-left: 17px; margin-right: 1px; }
  .vsep { width: 2px; height: 16px; background: #e8d3ff; margin: 0 16px 0 17px; }
  .avatar { width: 20px; height: 20px; border-radius: 50%; background: #f26c00; color: #fff; font-size: 11px; line-height: 20px; text-align: center; }
  .update { width: 199px; height: 34px; border-radius: 17px; background: #e8d3ff; margin-left: 12px; padding-left: 15px; display: flex; align-items: center; gap: 11px; font-size: 14.670px; color: #222; }

  .viewport { flex: 1; display: flex; min-height: 0; background: #fff; }
  .page { width: 1841px; display: flex; flex-direction: column; min-height: 0; }
  .topnav { height: 46px; flex: none; background: #e95420; color: #fff; display: flex; align-items: center; font-size: 16px; font-weight: 300; line-height: 24px; padding-left: 21px; }
  .ubuntu { margin: 0 4px 4px 0; }
  .brand { width: 249px; padding-bottom: 4px; }
  .domain, .user { display: flex; align-items: center; }
  .domain svg { margin-right: 4.500px; }
  .user { margin-left: auto; padding-right: 18.500px; }
  .user svg { margin-right: 5px; }
  .tri { border: 5px solid transparent; border-top-color: #fff; border-bottom: 0; margin-left: 5px; }

  .columns { flex: 1; display: flex; min-height: 0; border-top: 1px solid #ccc; }
  aside { width: 235px; flex: none; display: flex; flex-direction: column; font-size: 16px; font-weight: 300; color: #555; line-height: 24px; }
  aside > div { width: 220px; flex: none; display: flex; align-items: center; }
  .chev { width: 8px; height: 6px; }
  .sec { justify-content: space-between; padding: 0 19px; color: #444; }
  .sec b { font-weight: 700; }
  .proj { height: 29px; border-bottom: 1px solid #aaa; padding-bottom: 12px; }
  .leaf { height: 42px; justify-content: flex-end; padding-right: 15px; color: #666; }
  aside > .sub { padding-bottom: 2px; }
  aside > .api { height: 41px; }
  .grp { justify-content: space-between; padding-right: 19px; }
  .grp .chev, .box .chev { margin-bottom: 5px; }
  .g1 { height: 42px; padding-left: 59px; }
  .g2 { height: 36px; padding-left: 74px; }
  .g3 { height: 40px; padding: 0 19px 2px 86.500px; }
  aside > .sel { height: 43px; background: #f6f6f6; font-weight: 700; color: #555; padding-bottom: 2px; }
  .box { height: 41px; border: 1px solid #b5b5b5; border-left: 0; margin-top: -1px; padding: 0 18px 2px 19px; background: linear-gradient(90deg, #f9f9f9 96%, #ececec); }
  .box .chev { margin-bottom: 4px; }
  .foot { height: 20px; background: #fafafa; }
  aside > .foot { margin-top: auto; width: 235px; }

  main { flex: 1; min-width: 0; padding: 13px 15px 0 0; display: flex; flex-direction: column; font-size: 16px; font-weight: 300; color: #333; line-height: 24px; }
  .crumbs { height: 40px; flex: none; background: #f5f5f5; border-radius: 4px; display: flex; align-items: center; padding-left: 15px; }
  .sl { color: #ccc; width: 15px; margin-right: 4.500px; text-align: center; }
  .here { color: #bbb; }
  h1 { margin: 0; height: 73px; flex: none; border-bottom: 1px solid #eee; font-size: 34px; font-weight: 500; line-height: 44px; padding-top: 13px; -webkit-text-stroke: .8px #333; }
  .actions { display: flex; justify-content: flex-end; height: 36px; margin-top: 18px; flex: none; }
  button { font: 400 16px/24px Ubuntu, 'Noto Sans', sans-serif; background: #fff; border: 1px solid #ccc; border-radius: 4px; display: flex; align-items: center; padding: 0 0 0 12px; color: #333; fill: currentColor; }
  .actions button { color: #e95420; }
  .b1 { width: 177px; gap: 2.500px; }
  .b2 { width: 118px; gap: 3px; padding-left: 11.500px; }
  .b3 { width: 149px; gap: 3px; margin-left: 3px; }
  .tabs { height: 41px; flex: none; display: flex; border-bottom: 1px solid #ddd; }
  .tabs span { line-height: 39px; }
  .t1 { padding: 1px 0 0 20px; width: 113px; color: #e95420; }
  .t2 { width: 91px; height: 41px; padding-left: 19px; border: 1px solid #ddd; border-bottom: 0; border-radius: 4px 4px 0 0; background: #fff; color: #666; }
  p { margin: 0; height: 43px; flex: none; line-height: 42px; }
  .toggles { display: flex; height: 37px; flex: none; }
  .k1 { width: 177px; background: #e6e6e6; border-color: #adadad; border-radius: 4px 0 0 4px; box-shadow: inset 0 3px 5px rgba(0, 0, 0, .125); padding: 0 0 2px 11.500px; gap: 3px; }
  .k2 { width: 229px; border-left: 0; border-radius: 0 4px 4px 0; padding: 0 0 2px 12px; gap: 3px; }
  .k3 { width: 187px; margin-left: 9px; font-family: 'Liberation Sans', sans-serif; padding: 0 0 1px 11.500px; gap: 3.500px; }

  .graph { width: 1591px; height: 600px; margin-top: 18px; }
  .graph circle { fill: #fff; stroke: #000; stroke-width: 3.300; }
  .graph line { stroke: #111; stroke-width: 1; }
  .hull { fill: #d2e4f0; }
  .graph text { font: 400 13px 'Liberation Sans', sans-serif; fill: #111; }

  .scroll { width: 15px; flex: none; background: #fafafa; display: flex; flex-direction: column; align-items: center; padding: 5px 0 6px; }
  .up, .down { border: 5px solid transparent; }
  .up { border-bottom: 6px solid #8a8a8a; border-top: 0; }
  .down { border-top: 6px solid #8a8a8a; border-bottom: 0; margin-top: auto; }
  .thumb { width: 9px; height: 746px; margin-top: 22px; border-radius: 5px; background: #8a8a8a; }
</style>
